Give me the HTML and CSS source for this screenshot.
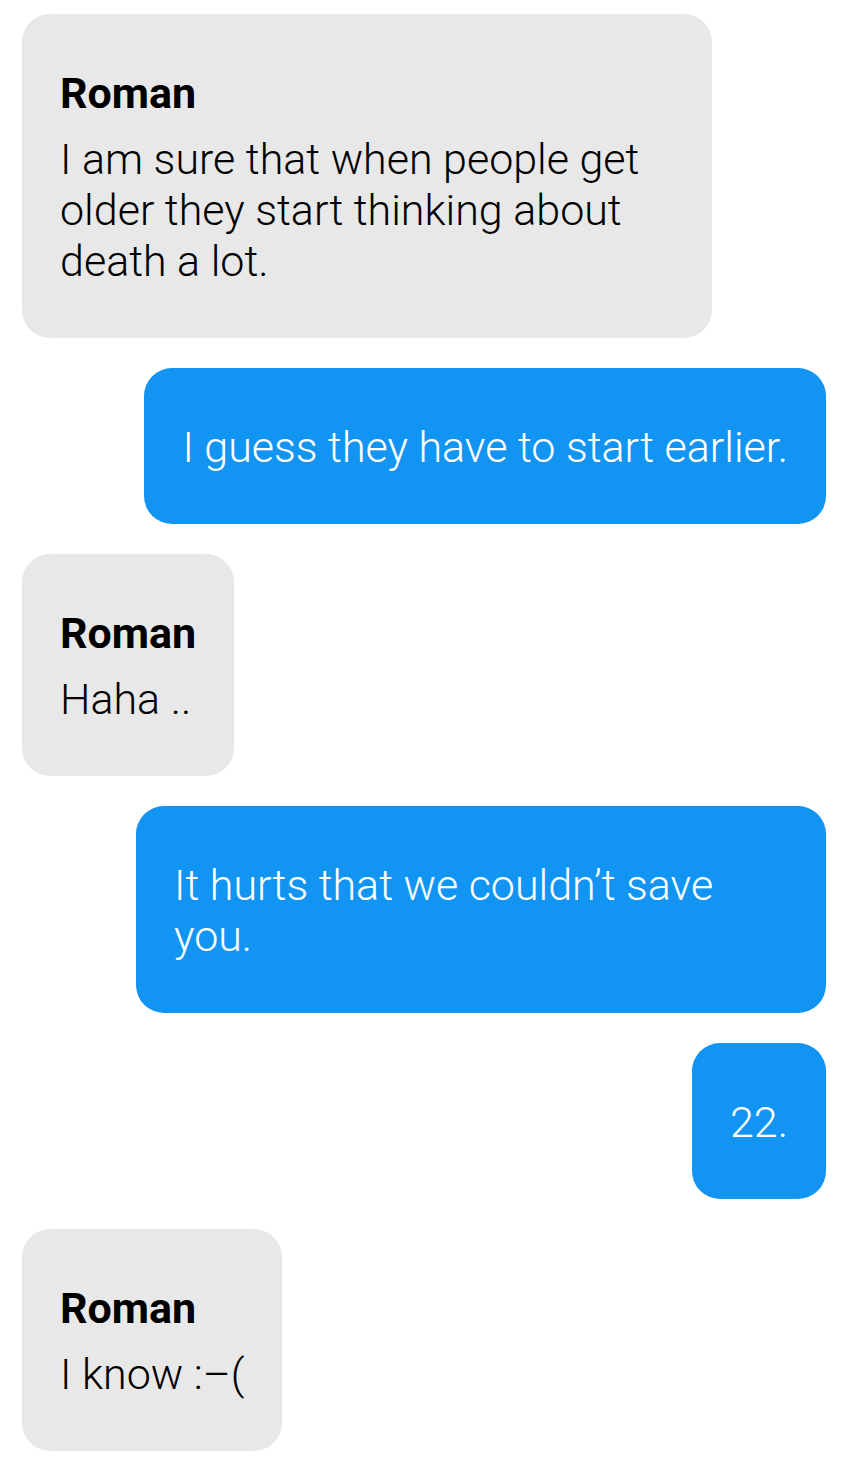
FILE: index.html
```html
<!DOCTYPE html>
<html lang="en">
<head>
    <meta charset="UTF-8">
    <meta name="viewport" content="width=device-width, initial-scale=1.0">
    <title>Roman</title>
    <link rel="stylesheet" href="styles.css">
</head>
<body>
    <main class="chat">
        <div class="bubble incoming">
            <p class="name">Roman</p>
            <p class="text">I am sure that when people get older they start thinking about death a lot.</p>
        </div>
        <div class="bubble outgoing">
            <p class="text">I guess they have to start earlier.</p>
        </div>
        <div class="bubble incoming">
            <p class="name">Roman</p>
            <p class="text">Haha ..</p>
        </div>
        <div class="bubble outgoing">
            <p class="text">It hurts that we couldn’t save you.</p>
        </div>
        <div class="bubble outgoing">
            <p class="text">22.</p>
        </div>
        <div class="bubble incoming">
            <p class="name">Roman</p>
            <p class="text">I know :–(</p>
        </div>
    </main>
</body>
</html>
```

FILE: styles.css
```css
body {
    margin: 0;
    padding: 0;
    background: #fff;
    font-family: Roboto, "Noto Sans", sans-serif;
}

.chat {
    display: flex;
    flex-direction: column;
    gap: 30px;
    padding: 14px 30px 20px 22px;
}

.bubble {
    max-width: 690px;
    box-sizing: border-box;
    padding: 54px 38px 51px;
    border-radius: 28px;
}

.bubble p {
    margin: 0;
}

.incoming {
    align-self: flex-start;
    background: #e8e8e8;
    color: #000;
}

.outgoing {
    align-self: flex-end;
    background: #1194f2;
    color: #fff;
}

.bubble .name {
    font-size: 43px;
    font-weight: 700;
    line-height: 51px;
    margin-bottom: 15px;
}

.text {
    font-size: 43px;
    font-weight: 300;
    line-height: 51px;
}
```
